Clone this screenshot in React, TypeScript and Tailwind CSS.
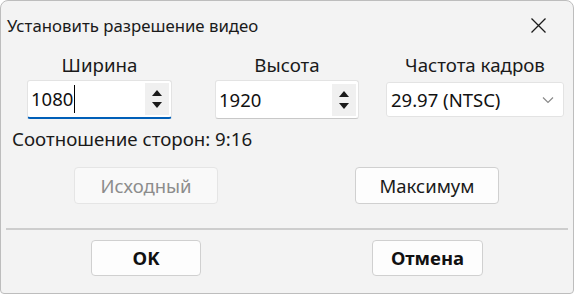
const font = { fontFamily: '"Noto Sans", "Open Sans", sans-serif' };

const Spinner = () => (
  <div className="flex flex-col items-center justify-center gap-[6px] w-[24px] h-[32px] bg-[#f0f0f0] mr-[2px]">
    <svg width="10" height="6" viewBox="0 0 10 6">
      <path d="M0 6 L5 0 L10 6 Z" fill="#1a1a1a" />
    </svg>
    <svg width="10" height="6" viewBox="0 0 10 6">
      <path d="M0 0 L10 0 L5 6 Z" fill="#1a1a1a" />
    </svg>
  </div>
);

interface NumberBoxProps {
  value: string;
  focused?: boolean;
}

const NumberBox = ({ value, focused }: NumberBoxProps) => (
  <div
    className={
      focused
        ? 'flex items-center h-[39px] bg-white border border-[#e3e3e3] border-b-2 border-b-[#005fb8] rounded-[3px] pl-[3px]'
        : 'flex items-center h-[39px] bg-white border border-[#e3e3e3] border-b-[#c8c8c8] rounded-[3px] pl-[3px]'
    }
  >
    <div className="grow flex items-center text-[18.5px] text-[#111]">
      {value}
      {focused && <span className="inline-block w-[1px] h-[28px] bg-black ml-[1px]" />}
    </div>
    <Spinner />
  </div>
);

const App = () => {
  return (
    <div
      className="w-[574px] h-[294px] bg-[#f3f3f3] border border-[#bdbdbd] rounded-t-[8px] rounded-b-[4px] flex flex-col overflow-hidden"
      style={font}
    >
      <div className="flex items-center justify-between h-[49px] pl-[6px] pr-[27px] shrink-0">
        <span className="text-[16.8px] text-[#1a1a1a]">Установить разрешение видео</span>
        <svg width="15" height="15" viewBox="0 0 15 15">
          <path d="M0.5 0.5 L14.5 14.5 M14.5 0.5 L0.5 14.5" stroke="#1a1a1a" strokeWidth="1.3" />
        </svg>
      </div>

      <div className="flex pl-[26px] shrink-0">
        <div className="flex flex-col w-[145px]">
          <div className="text-center text-[18.7px] leading-[30px] text-[#1a1a1a]">Ширина</div>
          <NumberBox value="1080" focused />
        </div>
        <div className="flex flex-col w-[144px] ml-[43px]">
          <div className="text-center text-[18.7px] leading-[30px] text-[#1a1a1a]">Высота</div>
          <NumberBox value="1920" />
        </div>
        <div className="flex flex-col w-[178px] ml-[27px]">
          <div className="text-center text-[18.7px] leading-[30px] text-[#1a1a1a]">Частота кадров</div>
          <div className="flex items-center justify-between h-[35px] mt-[2px] bg-white border border-[#e3e3e3] rounded-[3px] pl-[4px] pr-[9px]">
            <span className="text-[18.5px] text-[#111]">29.97 (NTSC)</span>
            <svg width="12" height="8" viewBox="0 0 12 8">
              <path d="M1 1.5 L6 6.5 L11 1.5" fill="none" stroke="#8a8a8a" strokeWidth="1.2" />
            </svg>
          </div>
        </div>
      </div>

      <div className="pl-[11px] mt-[7px] text-[18.7px] leading-[26px] text-[#1a1a1a] shrink-0">
        Соотношение сторон: 9:16
      </div>

      <div className="flex pl-[73px] gap-[137px] mt-[15px] shrink-0">
        <button className="w-[144px] h-[37px] bg-[#f9f9f9] border border-[#e5e5e5] rounded-[4px] text-[18.5px] text-[#8c8c8c]">
          Исходный
        </button>
        <button className="w-[144px] h-[37px] bg-[#fdfdfd] border border-[#d0d0d0] rounded-[4px] text-[18.5px] text-[#1a1a1a]">
          Максимум
        </button>
      </div>

      <div className="mx-[5px] mt-[24px] h-[2px] bg-[#cdcdcd] shrink-0" />

      <div className="flex pl-[90px] gap-[171px] mt-[10px] shrink-0">
        <button className="w-[110px] h-[36px] bg-[#fdfdfd] border border-[#d0d0d0] rounded-[4px] text-[18.5px] font-bold text-[#111]">
          OK
        </button>
        <button className="w-[111px] h-[36px] bg-[#fdfdfd] border border-[#d0d0d0] rounded-[4px] text-[18.5px] font-bold text-[#111]">
          Отмена
        </button>
      </div>
    </div>
  );
};

export default App;
